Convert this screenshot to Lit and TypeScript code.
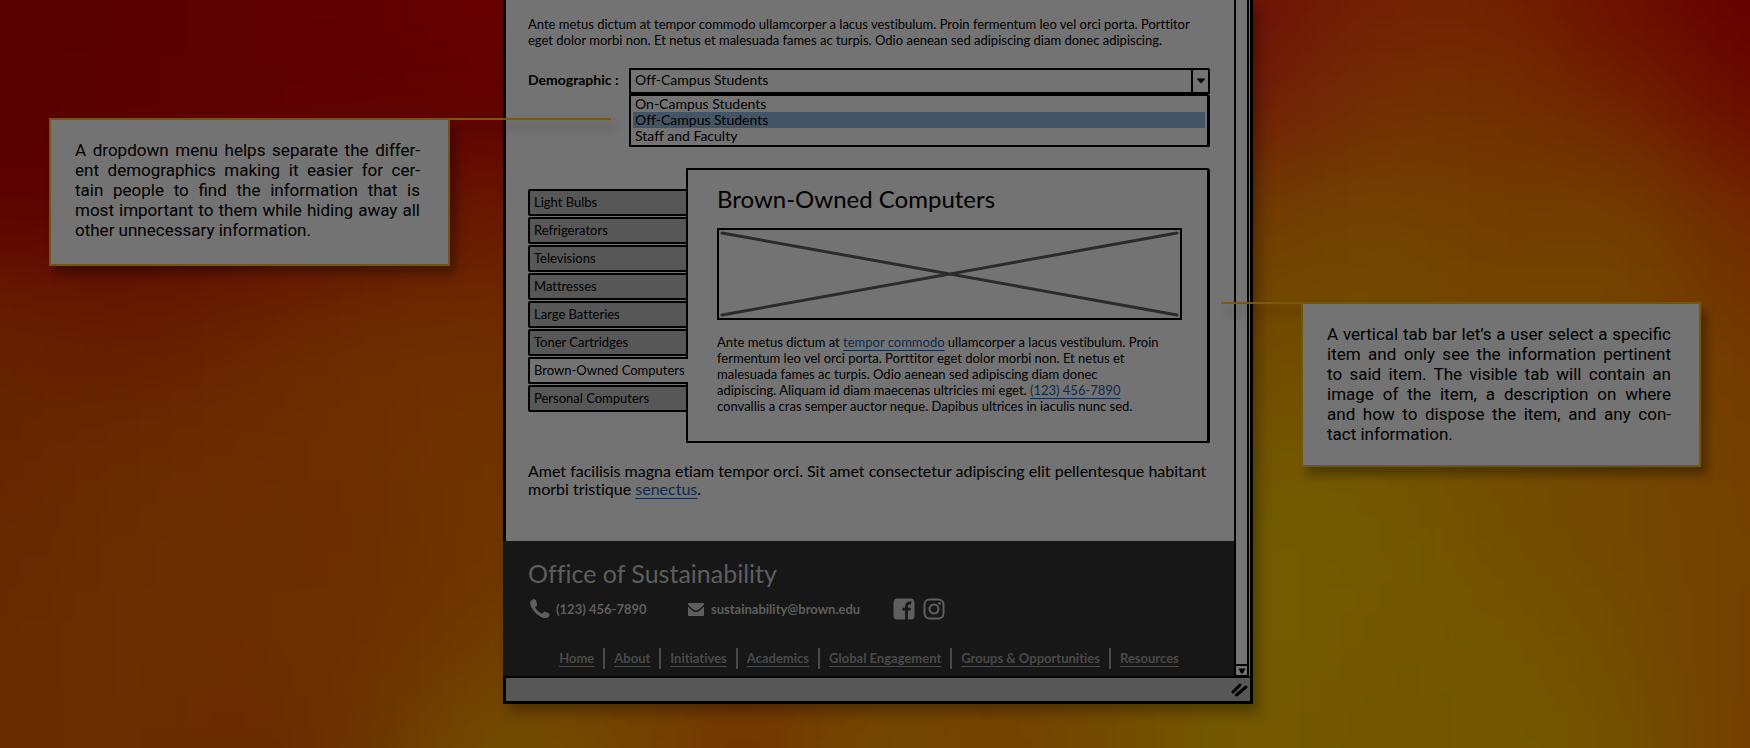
import { LitElement, html, svg, css } from "lit";
import { customElement, state } from "lit/decorators.js";
import { classMap } from "lit/directives/class-map.js";

/* Colour samples of the blurred backdrop, one row per 107 units, one column per 125. */
const BACKDROP: string[][] = [
  "550000 5a0000 5d0000 620000 680000 6a0000 6a0000 6a0000 6a0200 6c0600 6e1208 722004 722200 6c0c00 640000",
  "560000 5b0000 5d0000 5e0000 600000 620000 680000 6a0000 6c0400 6e0e00 701c08 733004 723000 712400 6a0800",
  "5c0200 5d0300 600800 621000 6a1a00 6a2000 6c2400 6e2800 6e2800 702e00 703c02 724402 723c00 724000 722600",
  "682200 641a00 682400 6c2c00 6e2c00 6e3000 6e3400 703800 703c00 724000 724800 724c00 734400 734600 733600",
  "662400 682800 6c2c00 6e3000 703400 703400 703400 703800 724000 724800 725400 725400 734c00 734800 733c00",
  "662800 692e00 6b2e00 6c2e00 703600 703800 703800 703c00 724400 725000 725c00 725a00 734e00 734800 734000",
  "682b00 6a2e00 6b2e00 6c3000 703c00 723e00 733a00 734000 734400 735000 735e00 735600 735600 734c00 733e00",
  "682b00 6a2e00 682800 6c3600 735200 734600 733200 734c00 734000 734c00 735a00 735200 735800 735200 733c00",
].map((row) => row.split(" "));

const TABS = [
  "Light Bulbs",
  "Refrigerators",
  "Televisions",
  "Mattresses",
  "Large Batteries",
  "Toner Cartridges",
  "Brown-Owned Computers",
  "Personal Computers",
];

const AUDIENCES = ["On-Campus Students", "Off-Campus Students", "Staff and Faculty"];

const SITE_LINKS = [
  "Home",
  "About",
  "Initiatives",
  "Academics",
  "Global Engagement",
  "Groups & Opportunities",
  "Resources",
];

@customElement("call-out")
class CallOut extends LitElement {
  static properties = { lines: { attribute: false }, side: { reflect: true } };
  declare lines: string[];
  declare side: string;

  static styles = css`
    :host {
      display: block;
      position: relative;
      box-sizing: border-box;
      border: 2px solid #735510;
      background: #737373;
      padding: 20px 28px 24px 24px;
      color: #000;
      font: 17px/20px Roboto, "Liberation Sans", sans-serif;
      filter: drop-shadow(6px 8px 5px rgba(0, 0, 0, 0.32));
    }
    :host([side="right"]) {
      border-color: #735706;
      padding-bottom: 21px;
    }
    p {
      margin: 0;
    }
    .line {
      display: block;
      text-align: justify;
      text-align-last: justify;
    }
    .line:last-child {
      text-align-last: left;
    }
    .connector {
      position: absolute;
      top: -2px;
      height: 2px;
      background: #7a5a08;
    }
    :host([side="left"]) .connector {
      left: 100%;
      width: 163px;
    }
    :host([side="right"]) .connector {
      right: 100%;
      width: 82px;
    }
  `;

  render() {
    return html`<p>${this.lines.map((l) => html`<span class="line">${l}</span>`)}</p>
      <span class="connector"></span>`;
  }
}

@customElement("tab-browser")
class TabBrowser extends LitElement {
  @state() private active = 6;

  static styles = css`
    :host {
      display: grid;
      grid-template-columns: 160px minmax(0, 1fr);
      align-items: start;
    }
    .tabs {
      display: flex;
      flex-direction: column;
      gap: 1px;
      margin-top: 21px;
    }
    .tab {
      box-sizing: border-box;
      height: 27px;
      padding: 0 0 1px 4px;
      border: 2px solid #000;
      border-radius: 2px 0 0 2px;
      background: #575757;
      color: #000;
      font: inherit;
      line-height: 22px;
      text-align: left;
      white-space: nowrap;
    }
    .tab.active {
      position: relative;
      z-index: 1;
      border-right: 0;
      background: #737373;
    }
    .panel {
      margin-left: -2px;
      border: 2px solid #000;
      border-right-width: 3px;
      border-radius: 1px 3px 1px 1px;
      padding: 14px 25px 27px 29px;
    }
    h2 {
      margin: 0;
      font-size: 24px;
      line-height: 30px;
      font-weight: 400;
    }
    .picture {
      display: block;
      box-sizing: border-box;
      width: 100%;
      height: 92px;
      margin: 14px 0;
      border: 2px solid #000;
    }
    p {
      margin: 0;
      white-space: nowrap;
    }
    a {
      color: #0e2a4e;
      text-underline-offset: 3px;
      text-decoration-skip-ink: none;
    }
  `;

  render() {
    return html`
      <div class="tabs" role="tablist" aria-orientation="vertical">
        ${TABS.map(
          (name, i) => html`<button
            class=${classMap({ tab: true, active: i === this.active })}
            role="tab"
            aria-selected=${i === this.active}
            @click=${() => (this.active = i)}
          >${name}</button>`
        )}
      </div>
      <section class="panel" role="tabpanel">
        <h2>${TABS[this.active]}</h2>
        <svg class="picture" viewBox="0 0 460 88" preserveAspectRatio="none" aria-hidden="true">
          <path d="M3 3 457 85M3 85 457 3" stroke="#2b2b2b" stroke-width="3" stroke-linecap="round" />
        </svg>
        <p>
          Ante metus dictum at <a href="#tempor">tempor commodo</a> ullamcorper a lacus vestibulum. Proin<br />
          fermentum leo vel orci porta. Porttitor eget dolor morbi non. Et netus et<br />
          malesuada fames ac turpis. Odio aenean sed adipiscing diam donec<br />
          adipiscing. Aliquam id diam maecenas ultricies mi eget. <a href="tel:1234567890">(123) 456-7890</a><br />
          convallis a cras semper auctor neque. Dapibus ultrices in iaculis nunc sed.
        </p>
      </section>
    `;
  }
}

@customElement("site-footer")
class SiteFooter extends LitElement {
  static styles = css`
    :host {
      display: block;
      background: #171717;
      color: #5e5e5e;
      padding: 17px 24px 7px 25px;
      font-weight: 700;
    }
    h3 {
      margin: 0 0 10px;
      font-size: 25px;
      line-height: 30px;
      font-weight: 400;
    }
    .contacts {
      display: flex;
      align-items: center;
      height: 22px;
      margin-bottom: 28px;
      line-height: 20px;
    }
    .contact {
      display: flex;
      align-items: center;
      gap: 7px;
      color: inherit;
      text-decoration: none;
    }
    .phone {
      gap: 6px;
      width: 158px;
      padding-left: 2px;
    }
    .mail {
      width: 205px;
    }
    .social {
      display: flex;
      margin-right: 8px;
      color: inherit;
    }
    nav {
      display: flex;
      justify-content: center;
      line-height: 21px;
    }
    .link {
      padding: 0 9px;
      border-left: 2px solid #4a4a4a;
      color: #4a4a4a;
      text-underline-offset: 3px;
      text-decoration-skip-ink: none;
      white-space: nowrap;
    }
    .link:first-child {
      border-left: 0;
    }
  `;

  render() {
    return html`
      <h3>Office of Sustainability</h3>
      <div class="contacts">
        <a class="contact phone" href="tel:1234567890">
          <svg width="20" height="20" viewBox="0 0 20 20" fill="currentColor" aria-hidden="true">
            <path d="M1.2 1.6C2.2.6 3.8.2 5 .4c.6.2.8.6 1 1.200l1.100 3.800c.2.7 0 1-.5 1.500L5.100 8.100c1.300 3 3.700 5.400 6.800 6.700l1.800-1.800c.4-.4.8-.5 1.300-.3l3.900 1.500c.6.2.8.6.7 1.200-.2 1.400-.9 2.600-2.100 3.200-2.400 1.200-6.600 0-10.300-3.200C2.900 11.700.3 7.400.2 4.300.1 3.100.5 2.300 1.200 1.600Z" />
          </svg>
          (123) 456-7890
        </a>
        <a class="contact mail" href="mailto:sustainability@brown.edu">
          <svg width="16" height="13" viewBox="0 0 16 13" fill="currentColor" aria-hidden="true">
            <path d="M.6 0h14.800a.6.6 0 0 1 .6.6v.9C13 4.800 10.200 7.600 8 7.600S3 4.800 0 1.500V.6A.6.6 0 0 1 .6 0Z" />
            <path d="M0 3.400C3 6.700 5.600 9 8 9s5-2.300 8-5.600v9a.6.6 0 0 1-.6.6H.6a.6.6 0 0 1-.6-.6Z" />
          </svg>
          sustainability@brown.edu
        </a>
        <a class="social" href="#facebook" aria-label="Facebook">
          <svg width="22" height="22" viewBox="0 0 22 22" aria-hidden="true">
            <rect x=".5" y=".5" width="21" height="21" rx="4" fill="currentColor" />
            <path d="M13.500 22v-8.300M13.500 14V8.800q0-4.300 4.800-3.800M9.500 11.200h8.300" fill="none" stroke="#171717" stroke-width="2.800" />
          </svg>
        </a>
        <a class="social" href="#instagram" aria-label="Instagram">
          <svg width="22" height="22" viewBox="0 0 22 22" fill="none" stroke="currentColor" aria-hidden="true">
            <rect x="1.500" y="1.500" width="19" height="19" rx="5" stroke-width="2" />
            <circle cx="11" cy="11" r="4.500" stroke-width="2.200" />
            <circle cx="16.600" cy="5.400" r="1.400" fill="currentColor" stroke="none" />
          </svg>
        </a>
      </div>
      <nav>${SITE_LINKS.map((l) => html`<a class="link" href="#">${l}</a>`)}</nav>
    `;
  }
}

@customElement("app-root")
class AppRoot extends LitElement {
  @state() private audience = 1;

  static styles = css`
    :host {
      display: block;
      position: relative;
      min-height: 100vh;
      overflow: hidden;
      color: #000;
      font: 13px/16px Lato, "Liberation Sans", sans-serif;
      font-variant-ligatures: none;
    }
    .backdrop {
      position: absolute;
      inset: 0;
      width: 100%;
      height: 100%;
    }
    .stage {
      position: relative;
      display: grid;
      grid-template-columns: minmax(0, 1fr) 750px minmax(0, 1fr);
      align-items: start;
      padding-left: 6px;
    }
    .left,
    .right {
      z-index: 1;
    }
    .left {
      margin: 118px 53px 0 43px;
    }
    .right {
      margin: 302px 49px 0 48px;
    }
    .window {
      box-sizing: border-box;
      border: 3px solid #000;
      border-top: 0;
      border-bottom: 0;
      background: #737373;
      box-shadow: 6px 8px 12px rgba(0, 0, 0, 0.3);
    }
    .view {
      display: grid;
      grid-template-columns: minmax(0, 1fr) 16px;
    }
    .content {
      padding: 16px 24px 43px 22px;
    }
    p {
      margin: 0;
      white-space: nowrap;
    }
    .field {
      display: grid;
      grid-template-columns: 101px minmax(0, 1fr);
      margin: 20px 0 74px;
    }
    .label {
      font-size: 14px;
      font-weight: 700;
      line-height: 24px;
      white-space: nowrap;
    }
    .combo {
      position: relative;
      font-size: 14px;
    }
    .select {
      display: block;
      box-sizing: border-box;
      width: 100%;
      height: 26px;
      padding: 0 26px 3px 4px;
      border: 2px solid #000;
      border-radius: 1px 2px 1px 1px;
      appearance: none;
      background: transparent;
      color: #000;
      font: inherit;
      opacity: 1;
    }
    .arrow {
      position: absolute;
      top: 0;
      right: 0;
      box-sizing: border-box;
      width: 19px;
      height: 26px;
      border-left: 2px solid #000;
      pointer-events: none;
    }
    .menu {
      position: absolute;
      top: 100%;
      left: 0;
      right: 0;
      margin: 0;
      padding: 0 2px 1px;
      border: 2px solid #000;
      border-right-width: 3px;
      border-radius: 1px 3px 1px 1px;
      background: #737373;
      line-height: 16px;
      list-style: none;
    }
    .option {
      padding-left: 2px;
    }
    .option.chosen {
      background: #435467;
    }
    .closing {
      margin-top: 19px;
      font-size: 16px;
      line-height: 18px;
    }
    .closing a {
      color: #0e2a4e;
      text-underline-offset: 3px;
      text-decoration-skip-ink: none;
    }
    .footer {
      margin-left: -3px;
    }
    .scrollbar {
      display: flex;
      flex-direction: column;
      justify-content: flex-end;
      border: 2px solid #000;
      border-width: 0 2px 1px;
      margin-right: 1px;
    }
    .down {
      display: flex;
      justify-content: center;
      align-items: center;
      height: 11px;
      padding: 0;
      border: 0;
      border-top: 2px solid #000;
      background: none;
      color: #000;
    }
    .status {
      display: flex;
      justify-content: flex-end;
      align-items: center;
      box-sizing: border-box;
      height: 28px;
      padding-right: 2px;
      border: solid #000;
      border-width: 2px 0 3px;
      background: #575757;
    }
  `;

  render() {
    return html`
      <svg class="backdrop" viewBox="0 0 1750 748" preserveAspectRatio="none" aria-hidden="true">
        <defs>
          <filter id="soft" filterUnits="userSpaceOnUse" x="-200" y="-200" width="2150" height="1150" color-interpolation-filters="sRGB">
            <feGaussianBlur stdDeviation="58 48" />
          </filter>
        </defs>
        <g filter="url(#soft)">
          ${BACKDROP.map((row, r) =>
            row.map((colour, c) => {
              const first = c === 0, last = c === row.length - 1;
              const top = r === 0, bottom = r === BACKDROP.length - 1;
              const x = first ? -200 : c * 125 - 63;
              const y = top ? -200 : r * 107 - 54;
              return svg`<rect x=${x} y=${y} width=${first || last ? 264 : 127} height=${top || bottom ? 256 : 109} fill=${"#" + colour} />`;
            })
          )}
        </g>
      </svg>
      <main class="stage">
        <call-out
          class="left"
          side="left"
          .lines=${[
            "A dropdown menu helps separate the differ-",
            "ent demographics making it easier for cer-",
            "tain people to find the information that is",
            "most important to them while hiding away all",
            "other unnecessary information.",
          ]}
        ></call-out>
        <div class="window">
          <div class="view">
            <div>
              <div class="content">
                <p>
                  Ante metus dictum at tempor commodo ullamcorper a lacus vestibulum. Proin fermentum leo vel orci porta. Porttitor<br />
                  eget dolor morbi non. Et netus et malesuada fames ac turpis. Odio aenean sed adipiscing diam donec adipiscing.
                </p>
                <div class="field">
                  <label class="label" for="audience">Demographic :</label>
                  <div class="combo">
                    <select
                      class="select"
                      id="audience"
                      @change=${(e: Event) => (this.audience = (e.target as HTMLSelectElement).selectedIndex)}
                    >
                      ${AUDIENCES.map((a, i) => html`<option ?selected=${i === this.audience}>${a}</option>`)}
                    </select>
                    <svg class="arrow" viewBox="0 0 17 26" aria-hidden="true"><path d="M3.500 10.500h9l-4.500 5Z" /></svg>
                    <ul class="menu" role="listbox" aria-label="Demographic">
                      ${AUDIENCES.map(
                        (a, i) => html`<li
                          class=${classMap({ option: true, chosen: i === this.audience })}
                          role="option"
                          aria-selected=${i === this.audience}
                          @click=${() => (this.audience = i)}
                        >${a}</li>`
                      )}
                    </ul>
                  </div>
                </div>
                <tab-browser></tab-browser>
                <p class="closing">
                  Amet facilisis magna etiam tempor orci. Sit amet consectetur adipiscing elit pellentesque habitant<br />
                  morbi tristique <a href="#senectus">senectus</a>.
                </p>
              </div>
              <site-footer class="footer"></site-footer>
            </div>
            <div class="scrollbar">
              <button class="down" aria-label="Scroll down">
                <svg width="8" height="6" viewBox="0 0 8 6" aria-hidden="true"><path d="M.5.5h7L5 5.500H3Z" /></svg>
              </button>
            </div>
          </div>
          <div class="status">
            <svg width="17" height="14" viewBox="0 0 17 14" stroke="#000" stroke-width="3" stroke-linecap="round" aria-hidden="true">
              <path d="M2 9 9 2M5.500 12 15 4" />
            </svg>
          </div>
        </div>
        <call-out
          class="right"
          side="right"
          .lines=${[
            "A vertical tab bar let’s a user select a specific",
            "item and only see the information pertinent",
            "to said item. The visible tab will contain an",
            "image of the item, a description on where",
            "and how to dispose the item, and any con-",
            "tact information.",
          ]}
        ></call-out>
      </main>
    `;
  }
}
